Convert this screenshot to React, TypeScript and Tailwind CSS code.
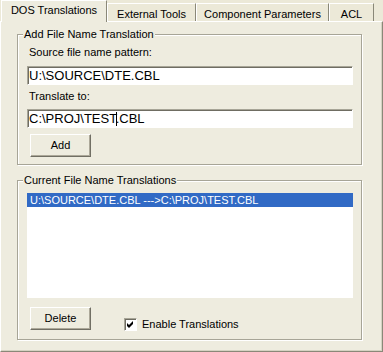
export default function App() {
  const tabBase =
    "border-t border-l border-r border-t-white border-l-white border-r-[#8A8878] flex justify-center shrink-0";
  const input =
    "w-[326px] h-[19px] bg-white border border-t-[#A7A597] border-l-[#A7A597] border-b-white border-r-white shadow-[inset_1px_1px_0_#6F6D62] pl-[1px] text-[13px] leading-[17px] whitespace-nowrap";
  const button =
    "w-[61px] h-[23px] bg-[#EEECDF] border border-t-white border-l-white border-b-[#716F64] border-r-[#716F64] shadow-[inset_-1px_-1px_0_#ACA899] flex items-center justify-center ml-[3px]";
  const fieldset =
    "w-[345px] border border-[#A7A597] shadow-[inset_1px_1px_0_#ffffff,1px_1px_0_#ffffff] p-0 m-0 min-w-0";
  const legend = "ml-[5px] px-[1px] h-[13px] leading-[13px] bg-[#EEECDF] relative";
  return (
    <div className="w-[383px] h-[352px] bg-[#ECE9D8] font-['Liberation_Sans',Arial,sans-serif] text-[11px] leading-[13px] text-black overflow-hidden">
      <div className="flex items-end h-[21px] pl-px relative z-10">
        <div className={`${tabBase} w-[106px] h-[22px] -mb-px bg-[#EEECDF] pt-[3px]`}>DOS Translations</div>
        <div className={`${tabBase} w-[89px] h-[18px] pt-[4px]`}>External Tools</div>
        <div className={`${tabBase} w-[133px] h-[18px] pt-[4px]`}>Component Parameters</div>
        <div className={`${tabBase} w-[45px] h-[18px] pt-[4px]`}>ACL</div>
      </div>
      <div className="w-[383px] h-[331px] bg-[#EEECDF] border border-t-white border-l-white border-r-[#8A8878] border-b-[#8A8878] shadow-[inset_-1px_-1px_0_#D5D2C2] pt-[6px] pl-[16px]">
        <fieldset className={`${fieldset} h-[137px]`}>
          <legend className={legend}>Add File Name Translation</legend>
          <div className="px-[9px] flex flex-col">
            <div className="mt-[5px] ml-[2px]">Source file name pattern:</div>
            <div className={`${input} mt-[7px]`}>{"U:\\SOURCE\\DTE.CBL"}</div>
            <div className="mt-[5px] ml-[2px]">Translate to:</div>
            <div className={`${input} mt-[6px]`}>
              <span>{"C:\\PROJ\\TEST"}</span>
              <span className="relative">
                .
                <span className="absolute left-0 top-[1px] w-px h-[14px] bg-black"></span>
              </span>
              <span>CBL</span>
            </div>
            <div className={`${button} mt-[6px]`}>Add</div>
          </div>
        </fieldset>
        <fieldset className={`${fieldset} h-[166px] mt-[9px]`}>
          <legend className={legend}>Current File Name Translations</legend>
          <div className="px-[9px] flex flex-col">
            <div className="mt-[6px] w-[326px] h-[105px] bg-white">
              <div className="h-[14px] leading-[14px] bg-[#316AC5] text-white pl-[3px] whitespace-nowrap">
                {"U:\\SOURCE\\DTE.CBL --->C:\\PROJ\\TEST.CBL"}
              </div>
            </div>
            <div className="flex items-start mt-[9px]">
              <div className={button}>Delete</div>
              <div className="flex items-center mt-[11px] ml-[33px]">
                <div className="w-[13px] h-[13px] bg-white border border-t-[#A7A597] border-l-[#A7A597] border-b-white border-r-white shadow-[inset_1px_1px_0_#6F6D62] flex items-center justify-center">
                  <svg width="11" height="11" viewBox="0 0 11 11">
                    <polygon points="2,4 4,6 8,2 8,5 4,9 2,7" fill="#000" />
                  </svg>
                </div>
                <span className="ml-[5px]">Enable Translations</span>
              </div>
            </div>
          </div>
        </fieldset>
      </div>
    </div>
  );
}
